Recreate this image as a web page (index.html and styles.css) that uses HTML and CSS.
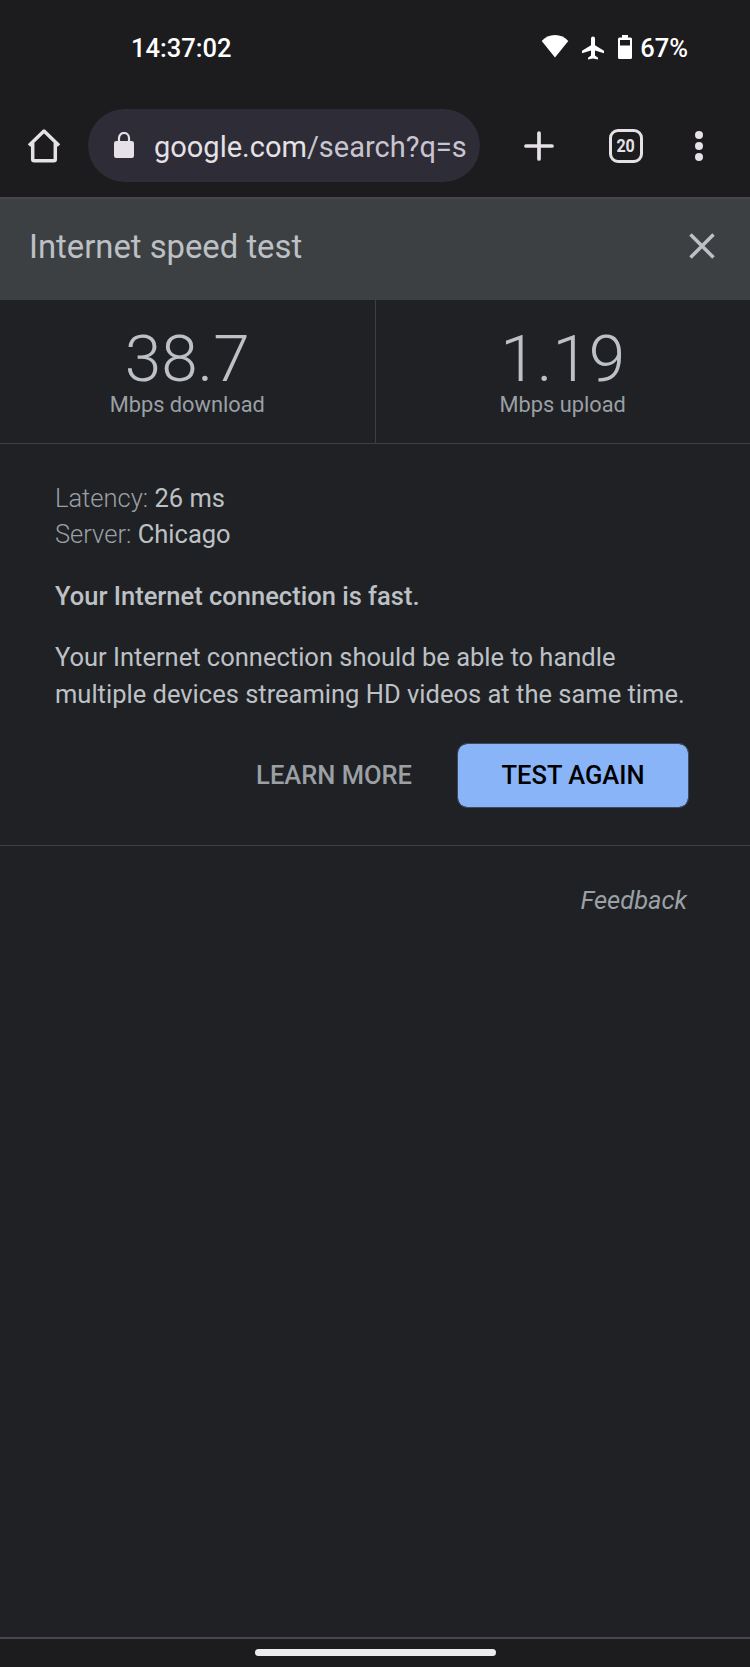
FILE: index.html
```html
<!DOCTYPE html>
<html lang="en">
<head>
<meta charset="utf-8">
<title>Internet speed test</title>
<link rel="stylesheet" href="styles.css">
</head>
<body>
<div class="screen">
  <header class="status">
    <span class="clock">14:37:02</span>
    <div class="indicators">
      <svg class="wifi" width="28" height="24" viewBox="0 0 28 24"><path d="M14 23.500 .7 6.900C4 3.200 8.600 1 14 1s10 2.200 13.300 5.900z" fill="#fff"/></svg>
      <svg class="plane" width="24" height="24" viewBox="0 0 24 24"><path d="M14 9.300V2.600a2 2 0 0 0-4 0v6.700L1 14.800v2.400l9-2.800v5l-3 2.300v1.900l5-1.200 5 1.200v-1.900l-3-2.300v-5l9 2.800v-2.400z" fill="#fff"/></svg>
      <svg class="battery" width="16" height="24" viewBox="0 0 16 24"><path fill-rule="evenodd" fill="#fff" d="M5 0h6v2.500h2.500a1.500 1.500 0 0 1 1.500 1.500v18.500a1.500 1.500 0 0 1-1.500 1.500h-11a1.500 1.500 0 0 1-1.500-1.500v-18.500a1.500 1.500 0 0 1 1.500-1.500h2.500zM3 5v5.500h10v-5.500z"/></svg>
      <span class="percent">67%</span>
    </div>
  </header>
  <nav class="toolbar">
    <svg class="home" width="34" height="36" viewBox="0 0 34 36"><path d="M2 17.500 17 3l15 14.500M5.700 15v16.300a1.500 1.500 0 0 0 1.500 1.500h19.600a1.500 1.500 0 0 0 1.500-1.500V15" fill="none" stroke="#e5e1e6" stroke-width="3.500" stroke-linejoin="round"/></svg>
    <div class="omnibox">
      <svg class="lock" width="20" height="26" viewBox="0 0 20 26"><path d="M5 10V6a5 5 0 0 1 10 0v4" fill="none" stroke="#e5e1e6" stroke-width="2.200"/><rect y="9" width="20" height="17" rx="2.200" fill="#e5e1e6"/></svg>
      <span class="url">google.com<span class="path">/search?q=s</span></span>
    </div>
    <svg class="plus" width="30" height="30" viewBox="0 0 30 30"><path d="M15 2v26M2 15h26" stroke="#e5e1e6" stroke-width="3.700" stroke-linecap="round"/></svg>
    <div class="tabs"><span class="count">20</span></div>
    <svg class="menu" width="8" height="30" viewBox="0 0 8 30" fill="#e5e1e6"><circle cx="4" cy="4" r="4"/><circle cx="4" cy="15" r="4"/><circle cx="4" cy="26" r="4"/></svg>
  </nav>
  <main class="page">
    <div class="title-bar">
      <h1 class="title">Internet speed test</h1>
      <svg class="close" width="26" height="26" viewBox="0 0 26 26"><path d="M1.500 1.500l23 23M24.500 1.500l-23 23" stroke="#bdc1c6" stroke-width="3.500"/></svg>
    </div>
    <section class="results">
      <div class="result"><span class="value">38.7</span><span class="unit">Mbps download</span></div>
      <div class="result"><span class="value">1.19</span><span class="unit">Mbps upload</span></div>
    </section>
    <section class="details">
      <p class="line"><span class="key">Latency:</span> 26 ms</p>
      <p class="line"><span class="key">Server:</span> Chicago</p>
      <p class="verdict">Your Internet connection is fast.</p>
      <p class="summary">Your Internet connection should be able to handle<br>multiple devices streaming HD videos at the same time.</p>
      <div class="actions">
        <span class="learn">LEARN MORE</span>
        <span class="again">TEST AGAIN</span>
      </div>
    </section>
    <div class="feedback">Feedback</div>
  </main>
  <footer class="gesture"><div class="pill"></div></footer>
</div>
</body>
</html>
```

FILE: styles.css
```css
* { box-sizing: border-box; }
body { margin: 0; background: #202124; font-family: Roboto, sans-serif; }
p, h1 { margin: 0; }
svg { display: block; flex: none; }

.screen { width: 750px; height: 1667px; display: flex; flex-direction: column; overflow: hidden; }

.status {
  height: 97px; flex: none; background: #1c1b1d; color: #fff;
  display: flex; justify-content: space-between; align-items: flex-start;
  padding: 33px 62px 0 131px;
  font-size: 25.5px; font-weight: 500; line-height: 30px;
}
.indicators { display: flex; }
.wifi { margin: 1px 12px 0 0; }
.plane { margin: 3px 12px 0 0; }
.battery { margin: 2px 7px 0 0; }

.toolbar {
  height: 102px; flex: none; background: #1c1b1d; border-bottom: 2px solid #47464f;
  display: flex; align-items: center; padding: 0 45px 3px 27px;
}
.omnibox {
  width: 392px; height: 73px; margin-left: 27px; border-radius: 37px; background: #2e2c36;
  display: flex; align-items: center; padding: 0 10px 0 26px;
}
.lock { margin: 0 20px 2px 0; }
.url {
  flex: 1; white-space: nowrap;
  color: #e5e1e6; font-size: 29px; line-height: 40px; padding-top: 2px;
}
.path { color: #c8c5d0; }
.plus { margin-left: 44px; }
.tabs {
  width: 34px; height: 34px; margin-left: 55px; flex: none;
  border: 3.500px solid #e5e1e6; border-radius: 9px; color: #e5e1e6;
  font-size: 18.500px; font-weight: 700; line-height: 28px;
  display: flex; justify-content: center;
}
.count { transform: scaleX(0.87); }
.menu { margin-left: 52px; }

.page { flex: 1; background: #202124; color: #bdc1c6; }
.title-bar {
  height: 101px; background: #3c4043;
  display: flex; justify-content: space-between; align-items: center; padding: 0 35px 5px 29px;
}
.title { font-size: 32.800px; font-weight: 400; line-height: 40px; }
.close { margin-bottom: 3px; }
.results { display: flex; height: 144px; border-bottom: 1px solid #3c4043; }
.result { flex: 1; display: flex; flex-direction: column; align-items: center; padding-top: 28px; }
.result + .result { border-left: 1px solid #3c4043; }
.value { font-size: 65.700px; font-weight: 300; line-height: 62px; }
.unit { margin-top: 3px; font-size: 21.800px; line-height: 24px; color: #9aa0a6; }

.details {
  height: 402px; padding: 35.700px 61px 0 55px; border-bottom: 1px solid #3c4043;
  font-size: 25.500px; line-height: 36.750px;
}
.key { font-weight: 300; color: #9aa0a6; }
.verdict { font-weight: 500; margin-top: 24.750px; }
.summary { margin-top: 24.750px; white-space: nowrap; }
.actions { display: flex; justify-content: flex-end; align-items: center; margin-top: 30.300px; font-weight: 500; }
.learn { color: #9aa0a6; margin-right: 45px; padding-bottom: 1px; }
.again {
  width: 232px; height: 65px; border: 1px solid #3c4a5e; border-radius: 10px;
  background: #8ab4f8; background-clip: padding-box; color: #000;
  line-height: 62px; text-align: center;
}
.feedback {
  padding: 36px 63px 0 0; text-align: right; color: #9aa0a6;
  font-size: 25.500px; line-height: 37px; font-style: italic;
}

.gesture {
  height: 30px; flex: none; background: #1c1b1d; border-top: 2px solid #47464f;
  display: flex; justify-content: center; padding-top: 10px;
}
.pill { width: 241px; height: 7px; border-radius: 4px; background: #ececec; }
```
